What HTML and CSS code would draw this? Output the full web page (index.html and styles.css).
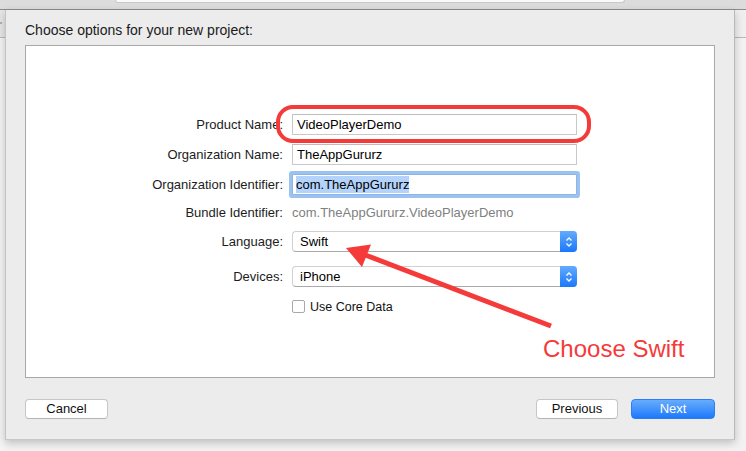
FILE: index.html
```html
<!DOCTYPE html>
<html>
<head>
<meta charset="utf-8">
<link rel="stylesheet" href="styles.css">
</head>
<body>
<div class="toolbar"><div class="search"></div></div>
<div class="stage">
  <div class="side side-left"><span class="dot"></span></div>
  <div class="sheet">
    <div class="title">Choose options for your new project:</div>
    <div class="panel">
      <div class="form">
        <div class="row">
          <div class="label">Product Name:</div>
          <div class="input">VideoPlayerDemo</div>
        </div>
        <div class="row">
          <div class="label">Organization Name:</div>
          <div class="input">TheAppGururz</div>
        </div>
        <div class="row">
          <div class="label">Organization Identifier:</div>
          <div class="input focused"><span class="selection">com.TheAppGururz</span></div>
        </div>
        <div class="row row-bundle">
          <div class="label">Bundle Identifier:</div>
          <div class="value">com.TheAppGururz.VideoPlayerDemo</div>
        </div>
        <div class="row row-language">
          <div class="label">Language:</div>
          <div class="popup">
            <span class="popup-text">Swift</span>
            <span class="stepper"><svg width="8" height="12" viewBox="0 0 8 12"><path d="M1.5 4.5 L4 2 L6.5 4.5 M1.5 7.5 L4 10 L6.5 7.5" fill="none" stroke="#fff" stroke-width="1.3"/></svg></span>
          </div>
        </div>
        <div class="row row-devices">
          <div class="label">Devices:</div>
          <div class="popup">
            <span class="popup-text">iPhone</span>
            <span class="stepper"><svg width="8" height="12" viewBox="0 0 8 12"><path d="M1.5 4.5 L4 2 L6.5 4.5 M1.5 7.5 L4 10 L6.5 7.5" fill="none" stroke="#fff" stroke-width="1.3"/></svg></span>
          </div>
        </div>
        <div class="row">
          <div class="label"></div>
          <label class="check"><span class="box"></span>Use Core Data</label>
        </div>
      </div>
    </div>
    <div class="buttons">
      <div class="btn btn-cancel">Cancel</div>
      <div class="spacer"></div>
      <div class="btn btn-prev">Previous</div>
      <div class="btn btn-next">Next</div>
    </div>
  </div>
  <div class="side side-right"></div>
</div>
<svg class="annotation" width="746" height="451" viewBox="0 0 746 451">
  <rect x="278" y="107" width="311" height="34" rx="15" ry="15" fill="none" stroke="#f53a3a" stroke-width="4"/>
  <line x1="551" y1="326" x2="364" y2="254.5" stroke="#f53a3a" stroke-width="5"/>
  <polygon points="346,248 371,244.5 362,267" fill="#f53a3a"/>
</svg>
<div class="callout">Choose Swift</div>
</body>
</html>
```

FILE: styles.css
```css
* { box-sizing: border-box; }

html, body {
  margin: 0;
  padding: 0;
}

body {
  width: 746px;
  height: 451px;
  overflow: hidden;
  position: relative;
  background: #f3f3f3;
  font-family: "Liberation Sans", Arial, sans-serif;
  font-size: 13px;
  color: #111;
}

.toolbar {
  height: 10px;
  background: #dcdcdc;
  border-bottom: 1px solid #8c8c8c;
}

.search {
  margin-left: 115px;
  width: 510px;
  height: 3px;
  background: #fafafa;
  border: 1px solid #c9c9c9;
  border-top: none;
  border-radius: 0 0 3px 3px;
}

.stage {
  display: flex;
  height: 441px;
}

.side {
  flex: none;
}

.side-left {
  width: 5px;
  background: linear-gradient(#e6e6e6 0 27px, #b8b8b8 27px 28px, #f4f4f4 28px);
  position: relative;
}

.dot {
  position: absolute;
  left: 0;
  top: 12px;
  width: 2px;
  height: 2px;
  background: #b0b0b0;
}

.side-right {
  flex: 1;
  background: linear-gradient(#efefef 0 27px, #b8b8b8 27px 28px, #f2f2f2 28px);
}

.sheet {
  flex: none;
  width: 730px;
  height: 430px;
  background: #ececec;
  border-left: 1px solid #c4c4c4;
  border-right: 1px solid #b9b9b9;
  border-bottom: 1px solid #c8c8c8;
  box-shadow: 0 3px 8px rgba(0, 0, 0, 0.22);
  padding: 0 19px;
  position: relative;
  z-index: 1;
}

.title {
  margin-top: 12px;
  height: 16px;
  line-height: 16px;
  font-size: 14px;
  color: #1a1a1a;
}

.panel {
  margin-top: 7px;
  height: 333px;
  background: #fff;
  border: 1px solid #a8a8a8;
  padding-top: 68px;
}

.form {
  display: flex;
  flex-direction: column;
  gap: 9px;
}

.row {
  display: flex;
  align-items: center;
  height: 21px;
  gap: 9px;
}

.row-bundle { height: 16px; }
.row-language { margin-top: 2px; }
.row-devices { margin-top: 5px; }

.label {
  width: 257px;
  text-align: right;
  font-size: 13px;
  color: #1c1c1c;
  flex: none;
}

.input {
  width: 285px;
  height: 21px;
  border: 1px solid #c9c9c9;
  border-top-color: #bdbdbd;
  background: #fff;
  padding-left: 4px;
  line-height: 19px;
  font-size: 13px;
  color: #000;
}

.input.focused {
  border-color: #8fb4e6;
  box-shadow: 0 0 0 3px #9cc2f2;
  border-radius: 1px;
  padding-left: 3px;
}

.selection {
  background: #b3d3fb;
  padding: 1px 0;
}

.value {
  font-size: 13px;
  color: #808080;
}

.popup {
  width: 285px;
  height: 21px;
  display: flex;
  align-items: stretch;
  background: #fff;
  border-radius: 4px;
  border: 1px solid #d0d0d0;
  border-bottom-color: #a9a9a9;
  border-right: none;
}

.popup-text {
  flex: 1;
  padding-left: 7px;
  line-height: 19px;
  font-size: 13px;
  color: #000;
}

.stepper {
  width: 17px;
  margin: -1px 0 -1px 0;
  background: linear-gradient(#62abfd, #1b78fb);
  border-radius: 0 4px 4px 0;
  display: flex;
  align-items: center;
  justify-content: center;
}

.check {
  display: flex;
  align-items: center;
  gap: 5px;
  font-size: 12.5px;
  color: #111;
}

.box {
  width: 13px;
  height: 13px;
  border: 1px solid #a9a9a9;
  border-radius: 2px;
  background: #fff;
}

.buttons {
  display: flex;
  margin-top: 21px;
  gap: 13px;
}

.spacer { flex: 1; }

.btn {
  height: 20px;
  line-height: 18px;
  text-align: center;
  font-size: 13px;
  background: #fff;
  border: 1px solid #c6c6c6;
  border-bottom-color: #b4b4b4;
  border-radius: 4px;
  color: #111;
}

.btn-cancel { width: 83px; }
.btn-prev { width: 82px; }

.btn-next {
  width: 84px;
  color: #fff;
  border: 1px solid #2a7ef5;
  background: linear-gradient(#67adfd, #1d79fb);
}

.annotation {
  position: absolute;
  left: 0;
  top: 0;
  z-index: 5;
  pointer-events: none;
}

.callout {
  position: absolute;
  left: 543px;
  top: 336px;
  z-index: 5;
  font-size: 24px;
  line-height: 26px;
  color: #f53a3a;
}
```
